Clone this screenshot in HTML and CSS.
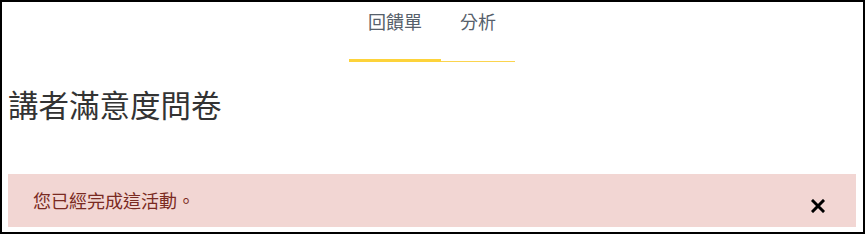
FILE: index.html
```html
<!DOCTYPE html>
<html lang="zh-Hant">
<head>
    <meta charset="UTF-8">
    <title>講者滿意度問卷</title>
    <link rel="stylesheet" href="styles.css">
</head>
<body>
    <div class="tabs">
        <div class="tab-list">
            <div class="tab active">回饋單</div>
            <div class="tab">分析</div>
        </div>
    </div>

    <h1 class="title">講者滿意度問卷</h1>

    <div class="alert">
        <span class="alert-text">您已經完成這活動。</span>
        <button class="close" aria-label="close">
            <svg width="14" height="14" viewBox="0 0 14 14">
                <path d="M2 2 L12 12 M12 2 L2 12" stroke="#000" stroke-width="3" stroke-linecap="square"/>
            </svg>
        </button>
    </div>
</body>
</html>
```

FILE: styles.css
```css
html {
    margin: 0;
}

body {
    margin: 0;
    height: 234px;
    box-sizing: border-box;
    border: 2px solid #000;
    padding: 0 7px 0 6px;
    background-color: #fff;
    font-family: "Noto Sans CJK TC", "Liberation Sans", sans-serif;
}

.tabs {
    display: flex;
    justify-content: center;
}

.tab-list {
    display: flex;
    border-bottom: 1px solid #fbd44e;
}

.tab {
    padding: 7px 19px 26px;
    font-size: 18px;
    line-height: 24px;
    color: #56606b;
    cursor: pointer;
}

.tab.active {
    border-bottom: 3px solid #fdd33a;
    margin-bottom: -1px;
}

.title {
    margin: 24px 0 52px 0;
    font-size: 30.5px;
    line-height: 36px;
    font-weight: normal;
    color: #333;
}

.alert {
    display: flex;
    justify-content: space-between;
    align-items: center;
    padding: 13px 25px 14px;
    background-color: #f2d6d3;
    color: #7a2a22;
    font-size: 18px;
    line-height: 24px;
}

.close {
    display: flex;
    margin: 12px 6px 0 0;
    padding: 0;
    border: none;
    background: none;
    cursor: pointer;
}
```
